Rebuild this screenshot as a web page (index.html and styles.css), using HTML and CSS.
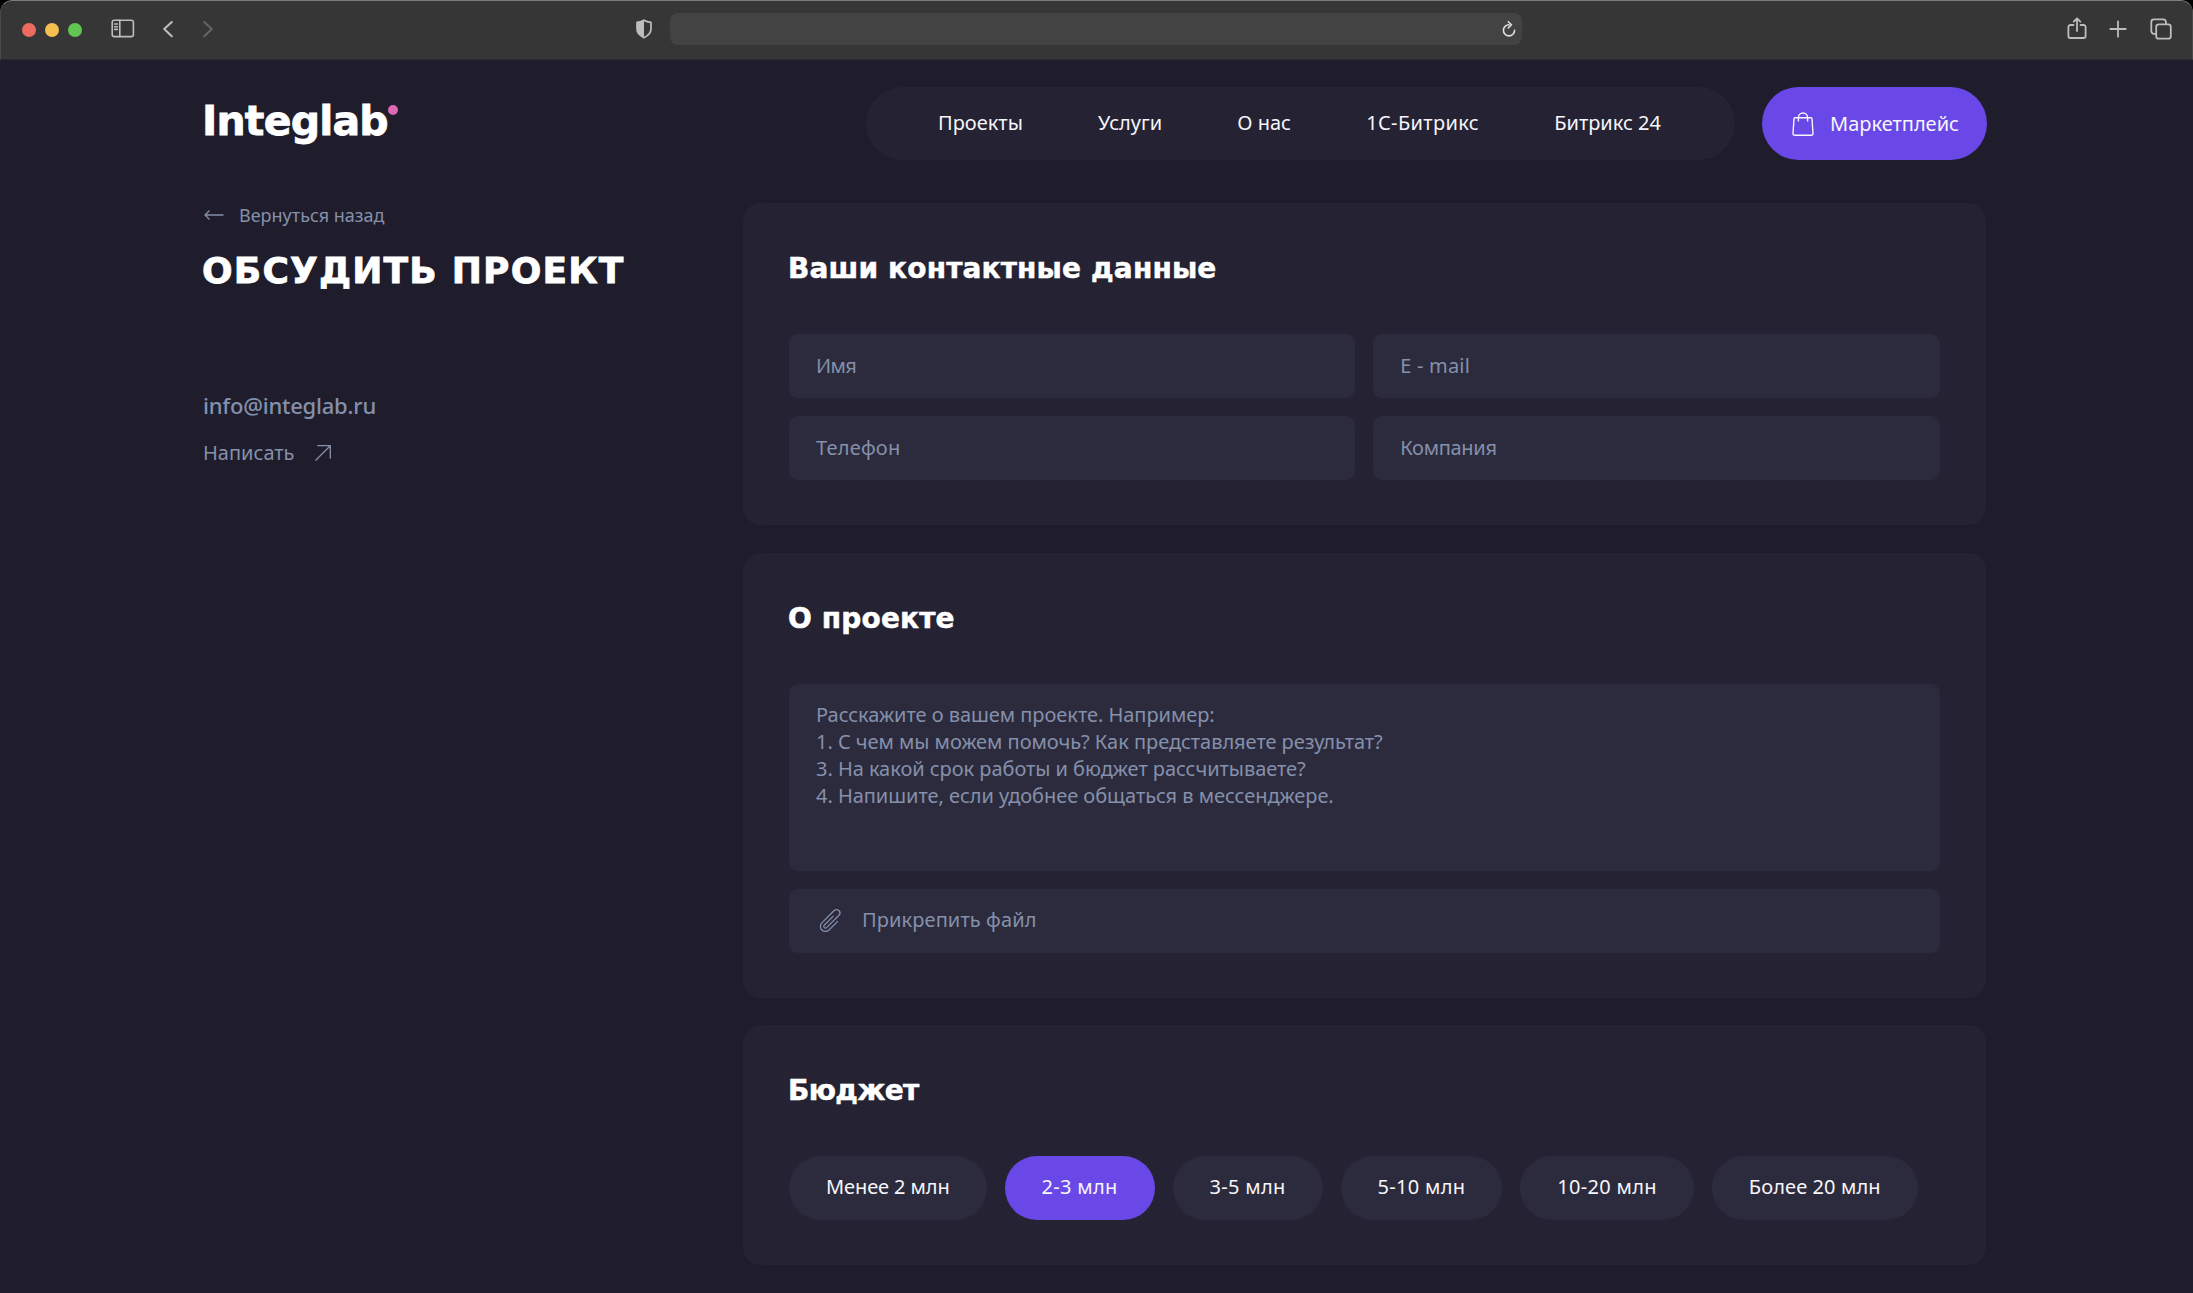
FILE: index.html
```
<!DOCTYPE html>
<html lang="ru">
<head>
<meta charset="utf-8">
<title>Integlab — Обсудить проект</title>
<link rel="stylesheet" href="styles.css">
</head>
<body>
<div class="window">
  <div class="chrome">
    <div class="chrome-left">
      <div class="lights"><i class="light red"></i><i class="light yellow"></i><i class="light green"></i></div>
      <svg class="icon sidebar-icon" width="24" height="19" viewBox="0 0 24 19"><rect x="1.2" y="1.2" width="21.2" height="16.4" rx="2.2"/><path d="M8.8 1.2v16.4M3.6 5h2.8M3.6 7.7h2.8M3.6 10.4h2.8"/></svg>
      <svg class="icon back-icon" width="12" height="18" viewBox="0 0 12 18"><path d="M9.8 2 2.2 9l7.6 7.2"/></svg>
      <svg class="icon forward-icon" width="12" height="18" viewBox="0 0 12 18"><path d="M2.2 2l7.6 7-7.6 7.2"/></svg>
    </div>
    <div class="chrome-center">
      <svg class="shield" width="18" height="20" viewBox="0 0 18 20"><path class="shield-line" d="M9 1.2c2 1.5 4.300 2 7 2.200v6.400c0 4.200-3 7-7 8.900-4-1.900-7-4.700-7-8.900V3.400C4.700 3.200 7 2.700 9 1.200z"/><path class="shield-fill" d="M9 1.200v17.500c-4-1.900-7-4.700-7-8.900V3.400C4.700 3.200 7 2.700 9 1.200z"/></svg>
      <div class="address">
        <svg class="icon reload" width="16" height="18" viewBox="0 0 16 18"><path d="M8 4.700A5.600 5.600 0 1 0 13.600 10.300M7.300 1.700l3.200 3.100-3.200 3.100"/></svg>
      </div>
    </div>
    <div class="chrome-right">
      <svg class="icon" width="20" height="23" viewBox="0 0 20 23"><path d="M6.500 8H3.400a2 2 0 0 0-2 2v9a2 2 0 0 0 2 2h13.200a2 2 0 0 0 2-2v-9a2 2 0 0 0-2-2h-3.100M10 14V1.600M6.700 4.700 10 1.500l3.300 3.200"/></svg>
      <svg class="icon" width="18" height="18" viewBox="0 0 18 18"><path d="M9 1.300v15.400M1.300 9h15.400"/></svg>
      <svg class="icon tabs-icon" width="22" height="22" viewBox="0 0 22 22"><rect x="6.200" y="6.400" width="14.600" height="14.300" rx="2.500"/><path d="M6 15.800H4a2.700 2.700 0 0 1-2.700-2.700V3.900A2.700 2.700 0 0 1 4 1.300h9.200A2.700 2.700 0 0 1 15.900 4v2"/></svg>
    </div>
  </div>

  <header class="header">
    <a class="logo">Integlab<i class="logo-dot"></i></a>
    <nav class="nav">
      <a>Проекты</a><a>Услуги</a><a>О нас</a><a class="loose">1С-Битрикс</a><a>Битрикс 24</a>
    </nav>
    <a class="market">
      <svg class="bag" width="24" height="26" viewBox="0 0 24 26"><path d="M4 6.800h16a1 1 0 0 1 1 1L22 22.500a1.700 1.700 0 0 1-1.700 1.800H3.700A1.700 1.700 0 0 1 2 22.500L3 7.800a1 1 0 0 1 1-1zM7.400 10.500V6.600a4.600 4.600 0 0 1 9.200 0v3.900"/></svg>
      <span>Маркетплейс</span>
    </a>
  </header>

  <main class="main">
    <aside class="side">
      <a class="back"><svg class="thin" width="21" height="12" viewBox="0 0 21 12"><path d="M19.500 6H1M5.500 1.500 1 6 5.500 10.500"/></svg><span>Вернуться назад</span></a>
      <h1 class="title">ОБСУДИТЬ ПРОЕКТ</h1>
      <a class="mail">info@integlab.ru</a>
      <a class="write"><span>Написать</span><svg class="thin" width="18" height="18" viewBox="0 0 18 18"><path d="M1.500 16.500 16.300 1.700M3.200 1.700h13.100v12.800"/></svg></a>
    </aside>

    <div class="cards">
      <section class="card">
        <h2 class="card-title">Ваши контактные данные</h2>
        <div class="fields">
          <div class="field short">Имя</div>
          <div class="field">E - mail</div>
          <div class="field">Телефон</div>
          <div class="field tight">Компания</div>
        </div>
      </section>

      <section class="card">
        <h2 class="card-title">О проекте</h2>
        <div class="area">Расскажите о вашем проекте. Например:<br>1. С чем мы можем помочь? Как представляете результат?<br>3. На какой срок работы и бюджет рассчитываете?<br>4. Напишите, если удобнее общаться в мессенджере.</div>
        <div class="field attach">
          <svg class="clip" width="27" height="27" viewBox="0 0 24 24"><path d="M18.375 12.739l-7.693 7.693a4.500 4.500 0 0 1-6.364-6.364l10.940-10.940A3 3 0 1 1 19.500 7.372L8.552 18.320M14.250 8.379l-7.810 7.810a1.500 1.500 0 0 0 2.112 2.130"/></svg>
          <span>Прикрепить файл</span>
        </div>
      </section>

      <section class="card">
        <h2 class="card-title budget">Бюджет</h2>
        <div class="chips">
          <div class="chip word">Менее 2 млн</div>
          <div class="chip active">2-3 млн</div>
          <div class="chip">3-5 млн</div>
          <div class="chip">5-10 млн</div>
          <div class="chip">10-20 млн</div>
          <div class="chip more">Более 20 млн</div>
        </div>
      </section>
    </div>
  </main>
</div>
</body>
</html>
```
FILE: styles.css
```
* { box-sizing: border-box; }

body {
  margin: 0;
  background: #000;
  font: 20px/28px "Noto Sans", sans-serif;
  color: #f6f5fa;
}

.window {
  height: 1293px;
  overflow: hidden;
  background: #1f1d2b;
  border-radius: 12px 12px 0 0;
}

/* Browser bar */
.chrome {
  display: flex;
  align-items: center;
  justify-content: space-between;
  height: 60px;
  padding: 0 20px 3px 21px;
  background: #363636;
  border: 1px solid #494949;
  border-top-color: #7d7d7d;
  border-bottom-color: #2b2a33;
  border-radius: 12px 12px 0 0;
}

.chrome svg, .back svg, .write svg, .bag, .clip { display: block; flex: none; }

.chrome-left { display: flex; align-items: center; width: 611px; }
.lights { display: flex; gap: 9px; padding-top: 2px; }
.light { width: 14px; height: 14px; border-radius: 50%; }
.red { background: #ed6a5e; }
.yellow { background: #f5bf4f; }
.green { background: #61c554; }

.icon {
  fill: none;
  stroke: #bdbdbd;
  stroke-width: 1.8;
  stroke-linecap: round;
  stroke-linejoin: round;
}
.sidebar-icon { margin-left: 29px; stroke-width: 1.6; }
.back-icon { margin-left: 27px; stroke-width: 2.1; }
.forward-icon { margin-left: 28px; stroke: #646464; stroke-width: 2.1; }

.chrome-center { display: flex; align-items: center; gap: 17px; margin-right: auto; }
.shield { margin-left: 2px; }
.shield-line { fill: none; stroke: #bdbdbd; stroke-width: 1.7; stroke-linejoin: round; }
.shield-fill { fill: #bdbdbd; }

.address {
  display: flex;
  align-items: center;
  justify-content: flex-end;
  width: 852px;
  height: 32px;
  margin-top: 1px;
  padding: 0 5px 1px 0;
  background: #434343;
  border-radius: 8px;
}
.reload { stroke: #dedede; stroke-width: 1.6; }

.chrome-right { display: flex; align-items: center; gap: 22px; }
.tabs-icon { margin-left: 1px; }

/* Site header */
.header {
  display: flex;
  align-items: center;
  height: 73px;
  margin: 27px 206px 0 203px;
}

.logo {
  position: relative;
  margin: 0 0 6px -1px;
  font: bold 41px/48px "DejaVu Sans", sans-serif;
  letter-spacing: -0.8px;
  color: #fff;
  -webkit-text-stroke: 0.8px #fff;
}
.logo-dot {
  position: absolute;
  left: 186px;
  top: 8px;
  width: 10px;
  height: 10px;
  border-radius: 50%;
  background: #dd67b0;
}

.nav {
  display: flex;
  align-items: center;
  justify-content: space-between;
  width: 869px;
  height: 73px;
  margin-left: auto;
  padding: 0 74px 1px 72px;
  border-radius: 37px;
  background: #252333;
}
.loose { letter-spacing: 0.35px; }

.market {
  display: flex;
  align-items: center;
  width: 225px;
  height: 73px;
  margin-left: 27px;
  padding: 0 0 0 29px;
  gap: 15px;
  border-radius: 37px;
  background: #6a48e7;
}
.bag { fill: none; stroke: #f6f5fa; stroke-width: 1.4; }

/* Page body */
.main {
  display: flex;
  justify-content: space-between;
  margin: 43px 207.5px 0 203px;
}

.side {
  display: flex;
  flex-direction: column;
  width: 460px;
  color: #8590ab;
}
.thin { fill: none; stroke: #8590ab; stroke-width: 1.3; }

.back {
  display: flex;
  align-items: center;
  gap: 14px;
  padding-left: 1px;
  font-size: 18px;
  line-height: 24px;
}
.title {
  margin: 22px 0 97px -1px;
  font: bold 36px/44px "DejaVu Sans", sans-serif;
  letter-spacing: 1.2px;
  white-space: nowrap;
  color: #fff;
  -webkit-text-stroke: 0.8px #fff;
}
.mail { font-size: 22px; font-weight: 500; line-height: 30px; letter-spacing: -0.22px; }
.write {
  display: flex;
  align-items: center;
  gap: 19px;
  margin-top: 19px;
}

.cards {
  display: flex;
  flex-direction: column;
  gap: 27.5px;
  width: 1242.5px;
}
.card {
  padding: 46px 46px 45px;
  border-radius: 18px;
  background: #252333;
}
.card-title {
  margin: 0 0 45px -1px;
  font: bold 28px/40px "DejaVu Sans", sans-serif;
  letter-spacing: 0.15px;
  color: #fff;
  -webkit-text-stroke: 0.5px #fff;
}
.budget { letter-spacing: -0.6px; }

.fields {
  display: grid;
  grid-template-columns: 1fr 1fr;
  gap: 18px;
}
.field {
  display: flex;
  align-items: center;
  height: 64px;
  padding: 0 27px 1px;
  border-radius: 9px;
  background: #2c2b3d;
  color: #8590ab;
  letter-spacing: 0.2px;
}
.short { letter-spacing: -0.6px; }
.tight { letter-spacing: -0.3px; }

.area {
  height: 187px;
  padding: 17px 27px;
  border-radius: 9px;
  background: #2c2b3d;
  color: #8590ab;
  line-height: 27.1px;
  letter-spacing: -0.04px;
}
.attach {
  margin-top: 18px;
  gap: 18px;
  padding: 0 28px 1px;
  letter-spacing: 0.1px;
}
.clip { fill: none; stroke: #8590ab; stroke-width: 1.1; stroke-linecap: round; stroke-linejoin: round; }

.chips { display: flex; gap: 18px; }
.chip {
  height: 64px;
  padding: 17px 37px 0;
  border-radius: 32px;
  background: #2c2b3d;
  letter-spacing: 0.3px;
  white-space: nowrap;
}
.word { letter-spacing: -0.1px; }
.more { letter-spacing: 0.1px; }
.active { background: #6a48e7; }
```
